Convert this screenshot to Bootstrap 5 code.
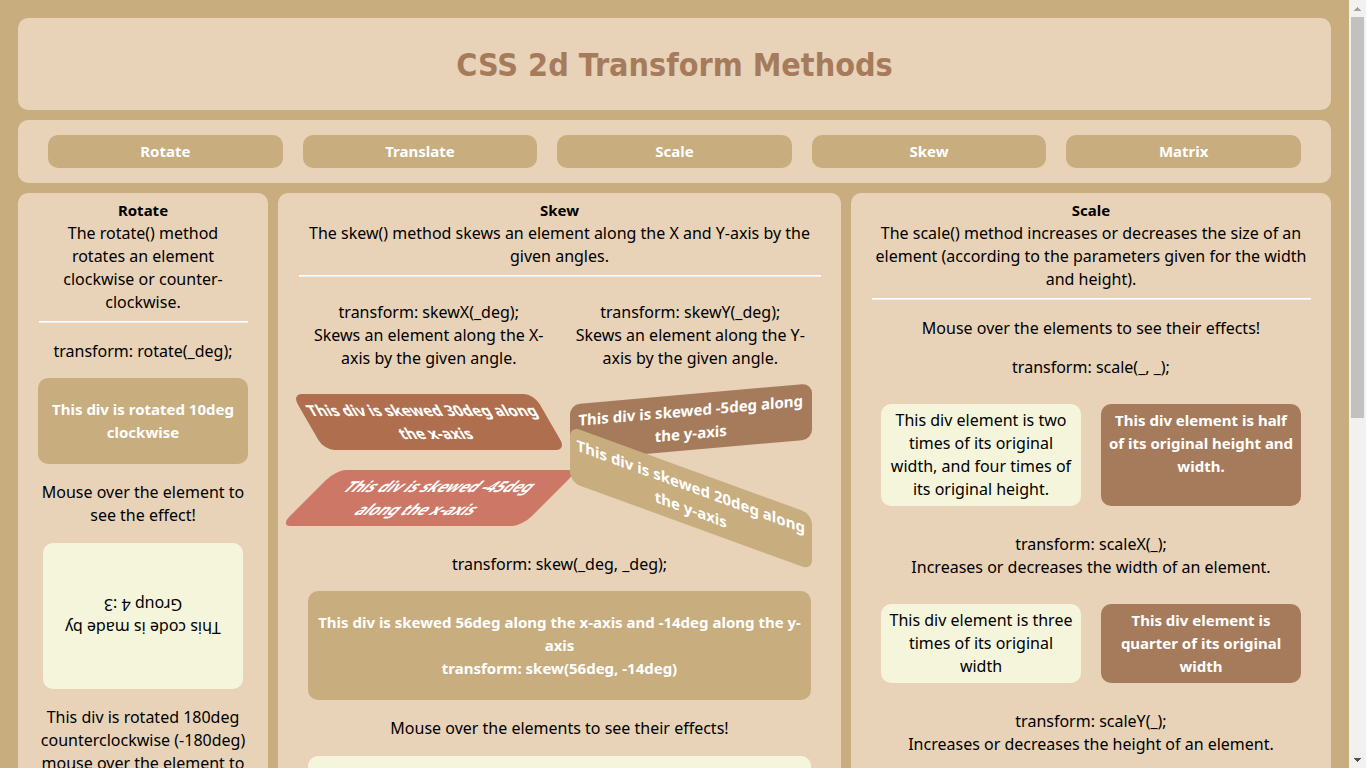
<!DOCTYPE html>
<html lang="en">
<head>
<meta charset="utf-8">
<meta name="viewport" content="width=device-width, initial-scale=1">
<title>CSS 2d Transform Methods</title>
<link rel="stylesheet" href="https://cdn.jsdelivr.net/npm/bootstrap@5.3.0/dist/css/bootstrap.min.css">
<style>
  :root { --sand: #c8ad7f; --cream: #e8d3b9; --cocoa: #a67b5b; --ivory: #f5f5dc; }
  body { background: var(--sand); color: #000; font: 16px/23px "Noto Sans", sans-serif; }
  .page-view { padding: 18px; scrollbar-width: none; }
  .page-view::-webkit-scrollbar { display: none; }
  .stack { gap: 10px; }
  .panel { background: var(--cream); border-radius: 10px; }
  .site-title { color: var(--cocoa); font: 700 32px/40px "DejaVu Sans Condensed", "DejaVu Sans", sans-serif; padding: 27px 0 25px; margin: 0; }
  .menu { padding: 15px 30px; gap: 20px; }
  .menu a { flex: 1 1 0; background: var(--sand); color: #fff; border-radius: 10px; padding: 5px; text-decoration: none; font-weight: 700; font-size: 15px; }
  .sections { display: grid; grid-template-columns: 250fr 563fr 480fr; }
  .section-col { padding: 6px 20px 20px; min-width: 0; }
  .section-col h2 { font: 700 15px/23px "Noto Sans", sans-serif; margin: 0; }
  .section-col p { margin: 0 0 16px; }
  .section-col .intro { margin: 0; }
  .section-col hr { margin: 7px 0 17px 1px; border: 0; height: 2px; opacity: 1; background: linear-gradient(#fff 50%, #eee 50%); }
  .tile { border-radius: 10px; padding: 5px; }
  .tile-bold { color: #fff; font-weight: 700; font-size: 15px; white-space: nowrap; }
  .tile-roomy { padding: 20px 5px; }
  .sand { background: var(--sand); }
  .cocoa { background: var(--cocoa); }
  .ivory { background: var(--ivory); }
  .sienna { background: #af6e4d; }
  .coral { background: #cd7866; }
  .pair { display: grid; grid-template-columns: 1fr 1fr; gap: 20px; margin: 0 10px; }
  .pair .tile + .tile-next { margin-top: 20px; }
  #scale .pair { margin: 25px 10px 27px; }
  #rotate .tile-bold { margin: 15px 0 17px; }
  .flip { transform: rotate(180deg); padding: 50px 5px; margin: 0 5px 17px; }
  .skew-x30 { transform: skewX(30deg); }
  .skew-x45 { transform: skewX(-45deg); }
  .skew-y5 { transform: skewY(-5deg); }
  .skew-y20 { transform: skewY(20deg); }
  .section-col .skew-both { margin: 27px 0 15px; }
  .wide-tile { margin: 0 10px 17px; }
  .empty-tile { min-height: 109px; }
  .bar-track { width: 17px; background: #f1f1f1; }
  .bar-track button { height: 17px; width: 17px; border: 0; padding: 0; background: none; display: flex; align-items: center; justify-content: center; }
  .bar-thumb { width: 13px; background: #c1c1c1; flex: 401 1 0; }
  .bar-rest { flex: 333 1 0; }
</style>
</head>
<body>
<div class="d-flex vh-100 overflow-hidden">
  <div class="page-view flex-fill overflow-auto text-center">
    <div class="stack d-flex flex-column">
      <header class="panel"><h1 class="site-title">CSS 2d Transform Methods</h1></header>
      <nav class="panel menu d-flex">
        <a href="#rotate">Rotate</a>
        <a href="#translate">Translate</a>
        <a href="#scale">Scale</a>
        <a href="#skew">Skew</a>
        <a href="#matrix">Matrix</a>
      </nav>
      <main class="sections stack">
        <section class="panel section-col" id="rotate">
          <h2>Rotate</h2>
          <p class="intro">The rotate() method<br>rotates an element<br>clockwise or counter-<br>clockwise.</p>
          <hr>
          <p class="mb-0">transform: rotate(_deg);</p>
          <div class="tile tile-bold tile-roomy sand">This div is rotated 10deg<br>clockwise</div>
          <p class="mb-3">Mouse over the element to<br>see the effect!</p>
          <div class="tile ivory flip">This code is made by<br>Group 4 :3</div>
          <p class="text-nowrap">This div is rotated 180deg<br>counterclockwise (-180deg)<br>mouse over the element to</p>
        </section>

        <section class="panel section-col" id="skew">
          <h2>Skew</h2>
          <p class="intro">The skew() method skews an element along the X and Y-axis by the<br>given angles.</p>
          <hr class="mb-4">
          <div class="pair">
            <div>
              <p class="text-nowrap mb-4">transform: skewX(_deg);<br>Skews an element along the X-<br>axis by the given angle.</p>
              <div class="tile tile-bold sienna skew-x30">This div is skewed 30deg along<br>the x-axis</div>
              <div class="tile tile-bold tile-next coral skew-x45">This div is skewed -45deg<br>along the x-axis</div>
            </div>
            <div>
              <p class="text-nowrap mb-4">transform: skewY(_deg);<br>Skews an element along the Y-<br>axis by the given angle.</p>
              <div class="tile tile-bold cocoa skew-y5">This div is skewed -5deg along<br>the y-axis</div>
              <div class="tile tile-bold tile-next sand skew-y20">This div is skewed 20deg along<br>the y-axis</div>
            </div>
          </div>
          <p class="skew-both">transform: skew(_deg, _deg);</p>
          <div class="tile tile-bold tile-roomy sand wide-tile">This div is skewed 56deg along the x-axis and -14deg along the y-<br>axis<br>transform: skew(56deg, -14deg)</div>
          <p class="mb-3">Mouse over the elements to see their effects!</p>
          <div class="tile ivory wide-tile empty-tile"></div>
        </section>

        <section class="panel section-col" id="scale">
          <h2>Scale</h2>
          <p class="intro">The scale() method increases or decreases the size of an<br>element (according to the parameters given for the width<br>and height).</p>
          <hr>
          <p>Mouse over the elements to see their effects!</p>
          <p>transform: scale(_, _);</p>
          <div class="pair">
            <div class="tile ivory">This div element is two<br>times of its original<br>width, and four times of<br>its original height.</div>
            <div class="tile tile-bold cocoa">This div element is half<br>of its original height and<br>width.</div>
          </div>
          <p>transform: scaleX(_);<br>Increases or decreases the width of an element.</p>
          <div class="pair">
            <div class="tile ivory">This div element is three<br>times of its original<br>width</div>
            <div class="tile tile-bold cocoa">This div element is<br>quarter of its original<br>width</div>
          </div>
          <p>transform: scaleY(_);<br>Increases or decreases the height of an element.</p>
        </section>
      </main>
    </div>
  </div>
  <div class="bar-track d-flex flex-column align-items-center flex-shrink-0">
    <button type="button" aria-label="Scroll up"><svg width="7" height="4" viewBox="0 0 7 4" shape-rendering="crispEdges"><path fill="#a3a3a3" d="M3 0h1v1h1v1h1v1h1v1H0V3h1V2h1V1h1z"/></svg></button>
    <div class="bar-thumb"></div>
    <div class="bar-rest"></div>
    <button type="button" aria-label="Scroll down"><svg width="7" height="4" viewBox="0 0 7 4" shape-rendering="crispEdges"><path fill="#505050" d="M0 0h7v1H6v1H5v1H4v1H3V3H2V2H1V1H0z"/></svg></button>
  </div>
</div>
<script src="https://cdn.jsdelivr.net/npm/bootstrap@5.3.0/dist/js/bootstrap.bundle.min.js"></script>
</body>
</html>
